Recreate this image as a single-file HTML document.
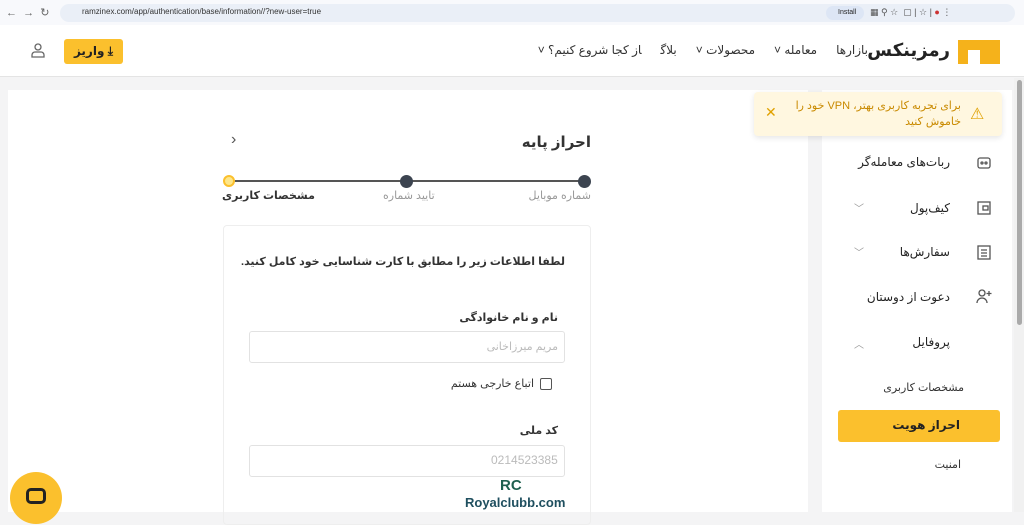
<!DOCTYPE html>
<html><head><meta charset="utf-8"><style>
*{box-sizing:border-box;margin:0;padding:0}
body{width:1024px;height:512px;overflow:hidden;background:#f4f4f5;font-family:"Liberation Sans","DejaVu Sans",sans-serif;position:relative;color:#222}
.a{position:absolute}
.r{direction:rtl;white-space:nowrap}
.nav span{margin-left:19px}
</style></head><body>
<div class="a" style="left:0;top:0;width:1024px;height:25px;background:#f8f9fc"></div>
<div class="a" style="left:6px;top:6px;font-size:11px;color:#666">←&nbsp;&nbsp;→&nbsp;&nbsp;↻</div>
<div class="a" style="left:60px;top:4px;width:955px;height:18px;border-radius:9px;background:#eaeff7"></div>
<div class="a" style="left:82px;top:7px;font-size:8px;color:#333">ramzinex.com/app/authentication/base/information//?new-user=true</div>
<div class="a" style="left:826px;top:6px;width:38px;height:14px;border-radius:7px;background:#dde6f5;font-size:7px;padding:3px 0 0 12px">Install</div>
<div class="a" style="left:870px;top:7px;font-size:9px;color:#555">▦ ⚲ ☆ &nbsp;▢ | ☆ | <span style="color:#c33">●</span> ⋮</div>
<div class="a" style="left:0;top:25px;width:1024px;height:52px;background:#fff;border-bottom:1px solid #e4e4e4"></div>
<div class="a" style="left:958px;top:40px;width:42px;height:24px;background:#f5b21b"></div>
<div class="a" style="left:968px;top:50px;width:12px;height:14px;background:#fff"></div>
<div class="a r" style="right:74px;top:40px;font-size:18px;font-weight:bold;color:#222;font-family:'DejaVu Sans',sans-serif">رمزینکس</div>
<div class="a r nav" style="right:156px;top:43px;font-size:12px;color:#333"><span>بازارها</span><span>معامله ˅</span><span>محصولات ˅</span><span>بلاگ</span><span>از کجا شروع کنیم؟ ˅</span></div>
<div class="a r" style="left:64px;top:39px;width:59px;height:25px;background:#fbc02d;border-radius:3px;font-size:12px;font-weight:bold;text-align:center;padding-top:5px">⤓ واریز</div>
<svg class="a" style="left:30px;top:42px" width="16" height="16" viewBox="0 0 16 16" fill="none" stroke="#666" stroke-width="1.3"><circle cx="8" cy="5" r="3"/><path d="M2 15v-2a3 3 0 0 1 3-3h6a3 3 0 0 1 3 3v2z"/></svg>
<div class="a" style="left:8px;top:90px;width:800px;height:422px;background:#fff"></div>
<div class="a" style="left:822px;top:90px;width:190px;height:422px;background:#fff"></div>
<div class="a" style="left:1014px;top:78px;width:10px;height:434px;background:#f1f1f1"></div>
<div class="a" style="left:1017px;top:80px;width:5px;height:245px;background:#aaa;border-radius:3px"></div>
<div class="a" style="left:754px;top:92px;width:248px;height:44px;background:#fff7e0;border-radius:4px;box-shadow:0 2px 6px rgba(0,0,0,.1)"></div>
<div class="a r" style="right:63px;top:98px;font-size:11px;color:#c98a00;text-align:right;line-height:16px">برای تجربه کاربری بهتر، VPN خود را<br>خاموش کنید</div>
<div class="a" style="left:970px;top:104px;font-size:16px;color:#e0a100">⚠</div>
<div class="a" style="left:765px;top:104px;font-size:14px;color:#e0a100">✕</div>
<div class="a r" style="right:74px;top:155px;font-size:12px">ربات‌های معامله‌گر</div>
<div class="a r" style="right:74px;top:201px;font-size:12px">کیف‌پول</div>
<div class="a r" style="right:74px;top:245px;font-size:12px">سفارش‌ها</div>
<div class="a r" style="right:74px;top:290px;font-size:12px">دعوت از دوستان</div>
<div class="a r" style="right:74px;top:335px;font-size:12px">پروفایل</div>
<div class="a" style="left:854px;top:200px;font-size:10px;color:#999">﹀</div>
<div class="a" style="left:854px;top:244px;font-size:10px;color:#999">﹀</div>
<div class="a" style="left:854px;top:336px;font-size:10px;color:#999">︿</div>
<svg class="a" style="left:975px;top:155px" width="18" height="170" fill="none" stroke="#555" stroke-width="1.3">
<rect x="3" y="3" width="12" height="10" rx="2"/><circle cx="7" cy="8" r="1"/><circle cx="11" cy="8" r="1"/>
<rect x="3" y="47" width="12" height="12"/><rect x="8" y="51" width="5" height="4"/>
<rect x="3" y="91" width="12" height="13"/><path d="M6 95h6M6 98h6M6 101h6"/>
<circle cx="7" cy="138" r="3"/><path d="M2 148a5 5 0 0 1 10 0M14 136v5M11.5 138.5h5"/>
<circle cx="9" cy="183" r="3"/><path d="M3 193v-2a3 3 0 0 1 3-3h6a3 3 0 0 1 3 3v2z"/></svg>
<div class="a r" style="right:60px;top:381px;font-size:11px;color:#333">مشخصات کاربری</div>
<div class="a r" style="left:838px;top:410px;width:162px;height:32px;background:#fbc02d;border-radius:3px;font-size:12px;font-weight:bold;padding:8px 40px 0 0">احراز هویت</div>
<div class="a r" style="right:63px;top:458px;font-size:11px;color:#333">امنیت</div>
<div class="a r" style="right:433px;top:133px;font-size:15px;font-weight:bold;color:#333">احراز پایه</div>
<div class="a" style="left:231px;top:131px;font-size:16px;color:#555">›</div>
<div class="a" style="left:229px;top:180px;width:356px;height:2px;background:#555"></div>
<div class="a" style="left:223px;top:175px;width:12px;height:12px;border-radius:50%;background:#fde68a;border:2px solid #fbc02d"></div>
<div class="a" style="left:400px;top:175px;width:13px;height:13px;border-radius:50%;background:#3c4450"></div>
<div class="a" style="left:578px;top:175px;width:13px;height:13px;border-radius:50%;background:#3c4450"></div>
<div class="a r" style="right:433px;top:189px;font-size:11px;color:#999">شماره موبایل</div>
<div class="a r" style="left:383px;top:189px;font-size:11px;color:#999">تایید شماره</div>
<div class="a r" style="left:222px;top:189px;font-size:11px;font-weight:bold;color:#333">مشخصات کاربری</div>
<div class="a" style="left:223px;top:225px;width:368px;height:300px;border:1px solid #eee;border-radius:4px"></div>
<div class="a r" style="right:459px;top:255px;font-size:11px;font-weight:bold;color:#333">لطفا اطلاعات زیر را مطابق با کارت شناسایی خود کامل کنید.</div>
<div class="a r" style="right:466px;top:311px;font-size:11px;font-weight:bold;color:#333">نام و نام خانوادگی</div>
<div class="a" style="left:249px;top:331px;width:316px;height:32px;border:1px solid #e2e2e2;border-radius:3px"></div>
<div class="a r" style="right:466px;top:340px;font-size:11px;color:#bbb">مریم میرزاخانی</div>
<div class="a" style="left:540px;top:378px;width:12px;height:12px;border:1.5px solid #555;border-radius:2px"></div>
<div class="a r" style="right:490px;top:377px;font-size:11px;color:#333">اتباع خارجی هستم</div>
<div class="a r" style="right:466px;top:424px;font-size:11px;font-weight:bold;color:#333">کد ملی</div>
<div class="a" style="left:249px;top:445px;width:316px;height:32px;border:1px solid #e2e2e2;border-radius:3px"></div>
<div class="a" style="left:491px;top:453px;font-size:12px;color:#bbb">0214523385</div>
<div class="a" style="left:460px;top:478px;width:110px;height:34px;background:#fff"></div>
<div class="a" style="left:500px;top:477px;font-size:15px;font-weight:bold;color:#1f5f4f">RC</div>
<div class="a" style="left:465px;top:495px;font-size:13px;font-weight:bold;color:#1f4f5f">Royalclubb.com</div>
<div class="a" style="left:10px;top:472px;width:52px;height:52px;border-radius:50%;background:#fbc02d"></div>
<div class="a" style="left:26px;top:488px;width:20px;height:16px;border:3px solid #222;border-radius:5px"></div>
</body></html>
